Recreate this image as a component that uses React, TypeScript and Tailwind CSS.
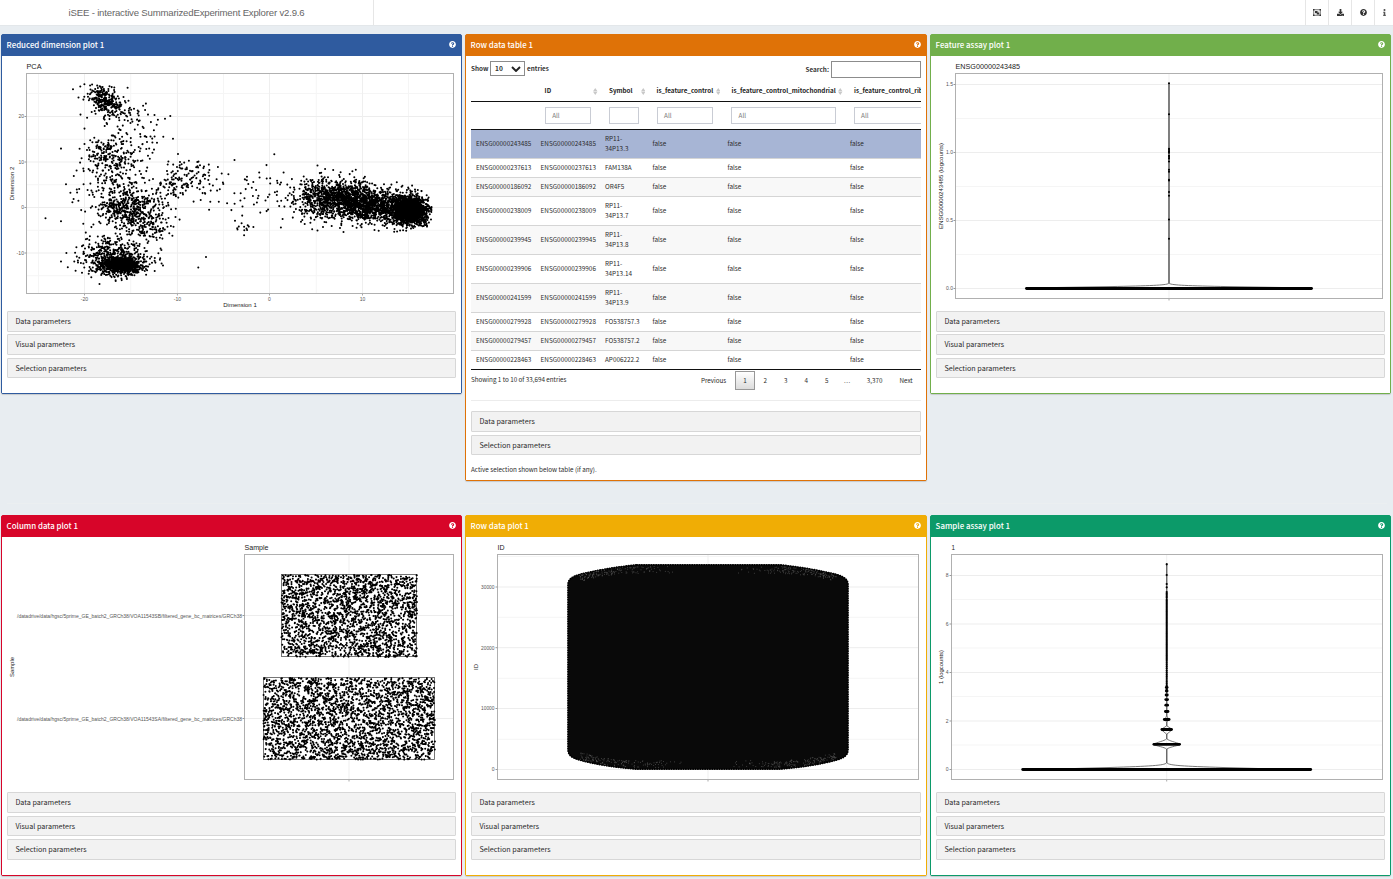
import React from "react";
import { FaQuestionCircle, FaDownload, FaInfo } from "react-icons/fa";

const SANS = "font-['Noto_Sans_CJK_SC','Noto_Sans',sans-serif]";

/* ---------- deterministic sample data ---------- */

function makeRandom(seed: number) {
  let s = seed;
  return () => {
    s = (s + 0x6d2b79f5) | 0;
    let t = Math.imul(s ^ (s >>> 15), 1 | s);
    t = (t + Math.imul(t ^ (t >>> 7), 61 | t)) ^ t;
    return ((t ^ (t >>> 14)) >>> 0) / 4294967296;
  };
}

function dot(x: number, y: number) {
  return `M${x.toFixed(1)} ${y.toFixed(1)}h0`;
}

type Cluster = [n: number, cx: number, cy: number, sx: number, sy: number, slope: number];

const clusters: Cluster[] = [
  [180, 105, 101, 7, 7, 0.3],
  [90, 104, 99, 13, 7, 0.4],
  [65, 130, 116, 13, 9, 0.3],
  [120, 107, 157, 9, 10, 0],
  [160, 116, 154, 18, 15, 0],
  [110, 114, 188, 18, 12, 0],
  [320, 127, 209, 15, 11, 0],
  [180, 138, 213, 18, 13, 0],
  [60, 154, 225, 8, 7, 0],
  [800, 121, 265, 11, 5, 0],
  [300, 112, 257, 17, 9, 0],
  [60, 122, 243, 22, 7, 0],
  [90, 178, 183, 13, 9, -0.4],
  [75, 196, 180, 19, 13, 0],
  [50, 258, 192, 26, 16, 0],
  [14, 246, 226, 5, 5, 0],
  [130, 312, 200, 15, 13, 0],
  [1150, 344, 199, 19, 9.3, 0.05],
  [900, 382, 207, 21, 8.2, 0],
  [1800, 410, 210.5, 8.5, 6.4, 0],
];

function pcaPath() {
  const r = makeRandom(29);
  const gauss = () => Math.sqrt(-2 * Math.log(r() + 1e-9)) * Math.cos(6.28318 * r());
  const out: string[] = [];
  for (const [n, cx, cy, sx, sy, k] of clusters) {
    for (let i = 0; i < n; i++) {
      const dx = gauss() * sx;
      const x = cx + dx;
      const y = cy + gauss() * sy + dx * k;
      if (x < 66 || x > 432 || y < 84 || y > 282) continue;
      if (x > 165 && (y > 236 || y < 158)) continue;
      out.push(dot(x, y));
    }
  }
  [[45.5, 218.3], [61, 221.3], [61, 148.6], [66, 184.3], [61, 261.5], [73, 89.3], [80.5, 114.6], [154.5, 115], [170.3, 116], [173, 138.7], [206, 257], [198.3, 267.4], [99.5, 284], [163, 265.4], [274.3, 154.3], [178, 154]].forEach(
    ([x, y]) => out.push(dot(x, y)),
  );
  return out.join("");
}

function uniformPath(seed: number, n: number, x0: number, y0: number, x1: number, y1: number) {
  const r = makeRandom(seed);
  let d = "";
  for (let i = 0; i < n; i++) d += dot(x0 + r() * (x1 - x0), y0 + r() * (y1 - y0));
  return d;
}

function specklePath() {
  const r = makeRandom(5);
  let d = "";
  for (let i = 0; i < 620; i++) {
    const side = r() < 0.5 ? -1 : 1;
    const u = 0.15 + 0.78 * Math.sqrt(r());
    const x = 708 + side * u * 138;
    const edge = u > 0.5 ? (u - 0.5) * (u - 0.5) * 45 : 0;
    const depth = 2.5 + edge + r() * 7;
    d += dot(x, r() < 0.5 ? 564 + depth : 770 - depth);
  }
  return d;
}

const PCA = pcaPath();
const SAMPLE_B = uniformPath(3, 2250, 281.5, 575, 417, 657);
const SAMPLE_A = uniformPath(8, 2750, 263.5, 678, 435, 759.5);
const SPECKLES = specklePath();

/* ---------- chart primitives ---------- */

type LabelProps = {
  x: number;
  y: number;
  w: number;
  size?: number;
  anchor?: "start" | "middle" | "end";
  fill?: string;
  rotate?: boolean;
  children: string;
};

function Label({ x, y, w, size = 5, anchor = "start", fill = "#555", rotate, children }: LabelProps) {
  return (
    <text
      x={x}
      y={y}
      fontSize={size}
      textAnchor={anchor}
      fill={fill}
      textLength={w}
      lengthAdjust="spacingAndGlyphs"
      transform={rotate ? `rotate(-90 ${x} ${y})` : undefined}
      className="font-['Liberation_Sans',sans-serif]"
    >
      {children}
    </text>
  );
}

type ChartProps = {
  view: string;
  className: string;
  frame: [number, number, number, number];
  major?: number[];
  minor?: number[];
  vMajor?: number[];
  vMinor?: number[];
  title: string;
  titleW: number;
  children: React.ReactNode;
};

function Chart({ view, className, frame, major = [], minor = [], vMajor = [], vMinor = [], title, titleW, children }: ChartProps) {
  const [x0, y0, x1, y1] = frame;
  return (
    <svg viewBox={view} className={className}>
      {minor.map((y) => <path key={`a${y}`} d={`M${x0} ${y}H${x1}`} stroke="#f5f5f5" />)}
      {vMinor.map((x) => <path key={`b${x}`} d={`M${x} ${y0}V${y1}`} stroke="#f5f5f5" />)}
      {major.map((y) => <path key={`c${y}`} d={`M${x0} ${y}H${x1}`} stroke="#ededed" />)}
      {vMajor.map((x) => <path key={`d${x}`} d={`M${x} ${y0}V${y1}`} stroke="#efefef" />)}
      {children}
      <rect x={x0} y={y0} width={x1 - x0} height={y1 - y0} fill="none" stroke="#b0b0b0" />
      {major.map((y) => <path key={`e${y}`} d={`M${x0 - 2} ${y}H${x0}`} stroke="#999" />)}
      {vMajor.map((x) => <path key={`f${x}`} d={`M${x} ${y1}v2`} stroke="#aaa" />)}
      <Label x={x0} y={y0 - 4.6} w={titleW} size={7.2} fill="#222">{title}</Label>
    </svg>
  );
}

function PcaPlot() {
  return (
    <Chart view="2 56 459 255" className="block h-[255px] w-[459px]" frame={[26.5, 73.5, 453.5, 293.5]}
      major={[116.5, 162, 207.5, 253]} minor={[93.5, 139.3, 184.7, 230.3, 275.7]}
      vMajor={[84.5, 177.4, 269.5, 362.5]} vMinor={[38.5, 130.7, 223.5, 316.3, 408.5]} title="PCA" titleW={15}>
      <path d={PCA} stroke="#000" strokeWidth="2.05" strokeLinecap="round" />
      <Label x={24} y={118.2} w={5.6} anchor="end">20</Label>
      <Label x={24} y={163.8} w={5.6} anchor="end">10</Label>
      <Label x={24} y={209.3} w={2.8} anchor="end">0</Label>
      <Label x={24} y={254.8} w={7.4} anchor="end">-10</Label>
      <Label x={84.5} y={300.6} w={7.4} anchor="middle">-20</Label>
      <Label x={177.4} y={300.6} w={7.4} anchor="middle">-10</Label>
      <Label x={269.5} y={300.6} w={2.8} anchor="middle">0</Label>
      <Label x={362.5} y={300.6} w={5.6} anchor="middle">10</Label>
      <Label x={240} y={307} w={33.5} size={6} anchor="middle" fill="#222">Dimension 1</Label>
      <Label x={14.2} y={183.5} w={33.5} size={6} anchor="middle" fill="#222" rotate>Dimension 2</Label>
    </Chart>
  );
}

const featureDots = [83.3, 114.3, 148.8, 150, 151.5, 152.8, 155.8, 157, 158.6, 161.5, 169.8, 171.8, 179.8, 180.4, 192, 195.8, 219.5, 238.8];

function FeaturePlot() {
  return (
    <Chart view="931 56 459 255" className="block h-[255px] w-[459px]" frame={[955.5, 73.5, 1382.5, 298.5]}
      major={[84.5, 152.5, 220.5, 288.5]} minor={[118.5, 186.5, 254.5]} vMajor={[1169]} title="ENSG00000243485" titleW={64.5}>
      <path d="M1168.6 83v200.5C1166 285.2 1150 285.8 1110 286.6L1027 288M1169.4 83v200.5C1172 285.2 1188 285.8 1228 286.6L1311 288" fill="none" stroke="#555" strokeWidth=".8" />
      <path d={featureDots.map((y) => dot(1169, y)).join("")} stroke="#000" strokeWidth="2.1" strokeLinecap="round" />
      <path d="M1026.5 288.5H1311.5" stroke="#000" strokeWidth="2.9" strokeLinecap="round" />
      <Label x={953} y={86.4} w={7} anchor="end">1.5</Label>
      <Label x={953} y={154.4} w={7} anchor="end">1.0</Label>
      <Label x={953} y={222.4} w={7} anchor="end">0.5</Label>
      <Label x={953} y={290.4} w={7} anchor="end">0.0</Label>
      <Label x={943.2} y={186} w={86} size={6} anchor="middle" fill="#222" rotate>ENSG00000243485 (logcounts)</Label>
    </Chart>
  );
}

function ColumnPlot() {
  return (
    <Chart view="2 537 459 255" className="block h-[255px] w-[459px]" frame={[244.5, 554.5, 453.5, 779.5]}
      major={[615.5, 718.5]} vMajor={[349]} title="Sample" titleW={24}>
      <rect x="281.5" y="574.5" width="135" height="82" fill="none" stroke="#555" strokeWidth=".8" />
      <rect x="263.5" y="677.5" width="171" height="82" fill="none" stroke="#555" strokeWidth=".8" />
      <path d={SAMPLE_B} stroke="#000" strokeWidth="2.05" strokeLinecap="round" />
      <path d={SAMPLE_A} stroke="#000" strokeWidth="2.05" strokeLinecap="round" />
      <Label x={242} y={617.5} w={225} anchor="end">/datadrive/data/hgsc/5prime_GE_batch2_GRCh38/VOA11543SB/filtered_gene_bc_matrices/GRCh38</Label>
      <Label x={242} y={720.5} w={225} anchor="end">/datadrive/data/hgsc/5prime_GE_batch2_GRCh38/VOA11543SA/filtered_gene_bc_matrices/GRCh38</Label>
      <Label x={14.2} y={667} w={20} size={6} anchor="middle" fill="#222" rotate>Sample</Label>
    </Chart>
  );
}

const BARREL =
  "M637 565L779 565C800 567 822 571 836 574.5C845 577 847.5 580 847.8 584V750C847.5 755 845 757.5 836 760C822 764 800 767.5 779 769H637C616 767.5 594 764 580 760C571 757.5 568.5 755 568.2 750V584C568.5 580 571 577 580 574.5C594 571 616 567 637 565Z";

function RowPlot() {
  return (
    <Chart view="466 537 460 255" className="block h-[255px] w-[460px]" frame={[497.5, 554.5, 918.5, 779.5]}
      major={[587, 647.7, 708.5, 769.5]} minor={[556.5, 617.3, 678.3, 739.3]} vMajor={[708]} title="ID" titleW={7}>
      <path d={BARREL} fill="#090909" stroke="#1a1a1a" strokeWidth="1" />
      <path d={BARREL} fill="none" stroke="#000" strokeWidth="2.2" strokeLinecap="round" strokeDasharray="0 2.4" />
      <path d={SPECKLES} stroke="#666" strokeWidth=".7" strokeLinecap="round" />
      <Label x={494.5} y={588.8} w={13.5} anchor="end">30000</Label>
      <Label x={494.5} y={649.5} w={13.5} anchor="end">20000</Label>
      <Label x={494.5} y={710.3} w={13.5} anchor="end">10000</Label>
      <Label x={494.5} y={771.3} w={2.8} anchor="end">0</Label>
      <Label x={478.2} y={667} w={6} size={6} anchor="middle" fill="#222" rotate>ID</Label>
    </Chart>
  );
}

function sampleColumn() {
  let d = dot(1166.7, 564.3) + dot(1166.7, 575) + dot(1166.7, 584) + dot(1166.7, 587.3);
  for (let y = 592; y < 660; y += y < 600 ? 1.4 : 1.1) d += dot(1166.7, y);
  for (let y = 661; y < 690; y += 1.9) d += dot(1166.7, y);
  return d;
}

const bars: [y: number, half: number][] = [[687.5, 0.4], [691, 0.4], [695, 0.6], [699.6, 0.9], [705.2, 0.9], [711.5, 1.3], [719.5, 2.4], [729.5, 4.8], [744.3, 12.8], [769.5, 144]];

function SamplePlot() {
  return (
    <Chart view="931 537 459 255" className="block h-[255px] w-[459px]" frame={[951.5, 554.5, 1382.5, 779.5]}
      major={[575.5, 624, 672.5, 721, 769.5]} minor={[599.5, 648, 696.5, 745]} vMajor={[1166.7]} title="1" titleW={3.5}>
      <path
        d="M1166.5 563V716L1165 719.5L1166.5 722V726L1161 729.5L1166.5 734V739C1164 741 1158 742 1153 744.3C1158 746.5 1164 747 1166.5 749V763C1164 765.5 1150 766.2 1110 767.5L1040 769.5M1167 563V716L1168.5 719.5L1167 722V726L1172.5 729.5L1167 734V739C1169.5 741 1175 742 1181 744.3C1175 746.5 1169.5 747 1167 749V763C1169.5 765.5 1183 766.2 1223 767.5L1293 769.5"
        fill="none" stroke="#555" strokeWidth=".8" />
      <path d={sampleColumn()} stroke="#000" strokeWidth="2.2" strokeLinecap="round" />
      {bars.map(([y, h]) => (
        <path key={y} d={`M${1166.7 - h} ${y}H${1166.7 + h}`} stroke="#000" strokeWidth="2.8" strokeLinecap="round" />
      ))}
      <Label x={948.5} y={577.3} w={2.8} anchor="end">8</Label>
      <Label x={948.5} y={625.8} w={2.8} anchor="end">6</Label>
      <Label x={948.5} y={674.3} w={2.8} anchor="end">4</Label>
      <Label x={948.5} y={722.8} w={2.8} anchor="end">2</Label>
      <Label x={948.5} y={771.3} w={2.8} anchor="end">0</Label>
      <Label x={943.2} y={667} w={34} size={6} anchor="middle" fill="#222" rotate>1 (logcounts)</Label>
    </Chart>
  );
}

/* ---------- panels ---------- */

function Param({ label, className }: { label: string; className: string }) {
  return (
    <div className={`mx-[5px] flex items-center rounded-[1px] border border-[#d7d7d7] bg-[#f2f2f2] px-[7.4px] text-[7.2px] leading-none text-[#2b2b2b] ${className}`}>
      {label}
    </div>
  );
}

function Panel({ title, tone, className, children }: { title: string; tone: string; className: string; children: React.ReactNode }) {
  return (
    <section className={`flex flex-col rounded-[2px] border shadow-[0_1px_1px_rgba(0,0,0,0.15)] ${tone} ${className}`}>
      <header className="flex h-[21px] shrink-0 items-center justify-between pr-[5px] pl-[4.6px] text-white">
        <h2 className="pb-[2px] text-[7.9px] leading-none font-medium">{title}</h2>
        <FaQuestionCircle className="mb-[2px] size-[7px]" />
      </header>
      <div className="flex min-h-0 grow flex-col bg-white">{children}</div>
    </section>
  );
}

function TopParams() {
  return (
    <>
      <Param label="Data parameters" className="h-[21px]" />
      <Param label="Visual parameters" className="mt-[2px] h-[21px]" />
      <Param label="Selection parameters" className="mt-[3px] h-[20px] pt-px" />
    </>
  );
}

function BottomParams() {
  return (
    <>
      <Param label="Data parameters" className="h-[21px]" />
      <Param label="Visual parameters" className="mt-[3px] h-[20px] pt-px" />
      <Param label="Selection parameters" className="mt-[3px] h-[21px]" />
    </>
  );
}

/* ---------- table ---------- */

const COLS = "grid w-[496px] grid-cols-[64.6px_64.4px_47.5px_75px_122.5px_122px]";

const heads: [string, string][] = [
  ["ID", "w-[46px]"],
  ["Symbol", "w-[30px]"],
  ["is_feature_control", "w-[56px]"],
  ["is_feature_control_mitochondrial", "w-[105px]"],
  ["is_feature_control_ribosomal", "w-[105px]"],
];

const rows: [string, string, string | null][] = [
  ["ENSG00000243485", "RP11-", "34P13.3"],
  ["ENSG00000237613", "FAM138A", null],
  ["ENSG00000186092", "OR4F5", null],
  ["ENSG00000238009", "RP11-", "34P13.7"],
  ["ENSG00000239945", "RP11-", "34P13.8"],
  ["ENSG00000239906", "RP11-", "34P13.14"],
  ["ENSG00000241599", "RP11-", "34P13.9"],
  ["ENSG00000279928", "FO538757.3", null],
  ["ENSG00000279457", "FO538757.2", null],
  ["ENSG00000228463", "AP006222.2", null],
];

function SortIcon() {
  return (
    <svg viewBox="0 0 5 8" className="h-[7px] w-[4.5px] shrink-0">
      <path d="M2.5 0L5 3.7H0zM2.5 8L0 4.3H5z" fill="#c8c8c8" />
    </svg>
  );
}

function rowClass(i: number) {
  if (i === 0) return "h-[28px] bg-[#a7b5d5]";
  const size = rows[i][2] ? "h-[29px]" : "h-[19px]";
  return `${size} border-t border-[#d5d5d5] ${i % 2 === 0 ? "bg-[#f8f8f8]" : "bg-white"}`;
}

function DataTable() {
  return (
    <div className="mx-[5px] overflow-hidden border-b border-[#111] text-[6.37px] text-[#2b2b2b]">
      <div className={`${COLS} h-[25px] border-b border-[#111] pt-[4px]`}>
        <div />
        {heads.map(([h]) => (
          <div key={h} className="flex items-center justify-between pr-[2px] pl-[9px] text-[6.27px] leading-none font-bold text-[#222]">
            <span className="whitespace-nowrap">{h}</span>
            <SortIcon />
          </div>
        ))}
      </div>
      <div className={`${COLS} h-[28px] items-center border-b border-[#111]`}>
        <div />
        {heads.map(([h, w], i) => (
          <div key={h} className={i < 3 ? "pl-[9.4px]" : "pl-[8.9px]"}>
            <div className={`flex h-[17px] items-center border border-[#c9ccd4] bg-white pt-px pl-[6.2px] leading-none text-[#777] ${w}`}>
              {i === 1 ? "" : "All"}
            </div>
          </div>
        ))}
      </div>
      {rows.map(([id, a, b], i) => (
        <div key={id} className={`${COLS} items-center leading-[10px] ${rowClass(i)}`}>
          <div className="pl-[5px]">{id}</div>
          <div className="pl-[5px]">{id}</div>
          <div className="pl-[5px] whitespace-nowrap">{a}{b && <><br />{b}</>}</div>
          <div className="pl-[5px]">false</div>
          <div className="pl-[5px]">false</div>
          <div className="pl-[5px]">false</div>
        </div>
      ))}
    </div>
  );
}

function TablePanel() {
  return (
    <Panel title="Row data table 1" tone="border-[#df7207] bg-[#df7207]" className="h-[447px] w-[462px]">
      <div className="flex h-[21px] items-start justify-between px-[5px] pt-[5px] text-[6.35px] leading-none font-bold text-[#333]">
        <div className="flex items-center gap-[2px]">
          <span className="w-[17px] pt-px">Show</span>
          <div className="flex h-[15px] w-[35px] items-center justify-between border border-[#8c8c8c] pr-[3px] pl-[4px] text-[6.6px]">
            10
            <svg viewBox="0 0 10 6" className="h-[6px] w-[10px]">
              <path d="M1 1L5 5L9 1" fill="none" stroke="#222" strokeWidth="1.9" />
            </svg>
          </div>
          <span className="pt-px">entries</span>
        </div>
        <div className="flex items-center gap-[2px]">
          <span className="pt-[2px]">Search:</span>
          <div className="h-[17px] w-[90px] border border-[#8c8c8c]" />
        </div>
      </div>
      <DataTable />
      <div className="mx-[5px] flex h-[31px] items-start justify-between border-b border-[#ececec] text-[6.28px] leading-none text-[#2b2b2b]">
        <span className="pt-[7px]">Showing 1 to 10 of 33,694 entries</span>
        <div className="mt-px mr-[0.4px] flex h-[19px] items-center text-center *:pt-px">
          <span className="w-[43px]">Previous</span>
          <span className="flex h-[19px] w-[20px] items-center justify-center border border-[#979797] bg-linear-to-b from-white to-[#dcdcdc]">1</span>
          <span className="w-[20.5px]">2</span>
          <span className="w-[20.5px]">3</span>
          <span className="w-[20.5px]">4</span>
          <span className="w-[20.5px]">5</span>
          <span className="w-[20.5px] tracking-[0.5px]">...</span>
          <span className="w-[34px]">3,370</span>
          <span className="w-[29px]">Next</span>
        </div>
      </div>
      <Param label="Data parameters" className="mt-[10px] h-[21px]" />
      <Param label="Selection parameters" className="mt-[3px] h-[20px] pt-px" />
      <p className="px-[5px] pt-[12px] text-[6.3px] leading-none text-[#2b2b2b]">Active selection shown below table (if any).</p>
    </Panel>
  );
}

/* ---------- page ---------- */

function GroupIcon() {
  return (
    <svg viewBox="0 0 16 14" className="h-[7px] w-[8px]">
      <rect x="1" y="1" width="14" height="12" fill="#ddd" stroke="#777" strokeWidth="1.5" />
      <path d="M0 0h3v3H0zM13 0H16v3h-3zM0 11h3V14H0zM13 11H16V14h-3zM4 4h5v4H4zM7.5 7h5V11H7.5z" fill="#333" />
    </svg>
  );
}

function TopBar() {
  return (
    <nav className="flex h-[26px] items-stretch justify-between border-b border-[#e3e7ea] bg-white text-[#333]">
      <div className="flex w-[374px] items-center justify-center border-r border-[#e6e6e6] text-[9.6px] leading-none tracking-[-0.18px] whitespace-nowrap text-[#666] font-['Liberation_Sans',sans-serif]">
        iSEE - interactive SummarizedExperiment Explorer v2.9.6
      </div>
      <div className="flex">
        <div className="flex w-[23px] items-center justify-center border-l border-[#e6e6e6]"><GroupIcon /></div>
        <div className="flex w-[23px] items-center justify-center border-l border-[#e6e6e6]"><FaDownload className="size-[7px]" /></div>
        <div className="flex w-[23px] items-center justify-center border-l border-[#e6e6e6]"><FaQuestionCircle className="size-[7px]" /></div>
        <div className="flex w-[19px] items-center justify-center border-l border-[#e6e6e6]"><FaInfo className="size-[7px] text-[#555]" /></div>
      </div>
    </nav>
  );
}

export default function App() {
  return (
    <div className={`flex h-[879px] w-[1393px] flex-col overflow-hidden bg-[#e8edf1] ${SANS}`}>
      <TopBar />
      <main className="flex flex-col pt-[8px] pl-px">
        <div className="flex h-[469px] items-start gap-[3px]">
          <Panel title="Reduced dimension plot 1" tone="border-[#2f5b9f] bg-[#2f5b9f]" className="h-[360px] w-[461px]">
            <PcaPlot />
            <TopParams />
          </Panel>
          <TablePanel />
          <Panel title="Feature assay plot 1" tone="border-[#71af4b] bg-[#71af4b]" className="h-[360px] w-[461px]">
            <FeaturePlot />
            <TopParams />
          </Panel>
        </div>
        <hr className="mx-[6px] mb-[11px] border-[#ebeff1]" />
        <div className="flex items-start gap-[3px]">
          <Panel title="Column data plot 1" tone="border-[#d70529] bg-[#d70529]" className="h-[361px] w-[461px]">
            <ColumnPlot />
            <BottomParams />
          </Panel>
          <Panel title="Row data plot 1" tone="border-[#f0ad05] bg-[#f0ad05]" className="h-[361px] w-[462px]">
            <RowPlot />
            <BottomParams />
          </Panel>
          <Panel title="Sample assay plot 1" tone="border-[#0c9a69] bg-[#0c9a69]" className="h-[361px] w-[461px]">
            <SamplePlot />
            <BottomParams />
          </Panel>
        </div>
      </main>
    </div>
  );
}
